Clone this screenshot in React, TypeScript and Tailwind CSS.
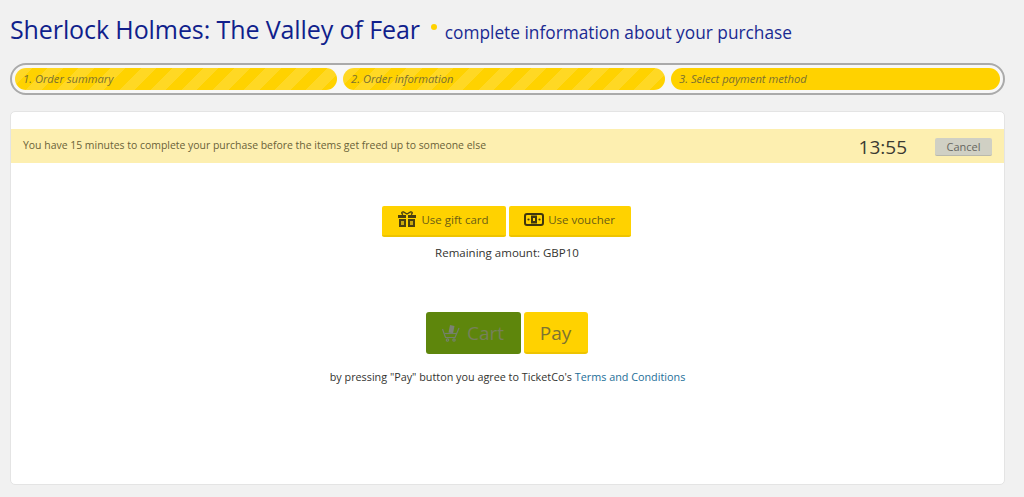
function GiftIcon() {
  return (
    <svg width="18" height="16" viewBox="0 0 18 16" className="mr-[5px] -mt-[3px]" fill="#4a3f10">
      <path d="M5 3.500C3 2.500 3.500.5 5.500 1L9 3l3.500-2c2-.5 2.500 1.500.5 2.500" fill="none" stroke="#4a3f10" strokeWidth="1.400" />
      <rect x="0" y="4" width="8" height="3" />
      <rect x="10" y="4" width="8" height="3" />
      <rect x="1" y="8" width="7" height="8" />
      <rect x="10" y="8" width="7" height="8" />
      <rect x="3" y="10" width="3" height="4" fill="#c9a80c" />
      <rect x="12" y="10" width="3" height="4" fill="#c9a80c" />
    </svg>
  );
}

function VoucherIcon() {
  return (
    <svg width="20" height="13" viewBox="0 0 20 13" className="mr-[4px] -mt-[3px]">
      <rect x="1" y="1" width="18" height="11" rx="2" fill="none" stroke="#3f360e" strokeWidth="2" />
      <rect x="7" y="2.500" width="6" height="8" fill="#3f360e" />
      <circle cx="4.500" cy="6.500" r="1.100" fill="#3f360e" />
      <circle cx="15.500" cy="6.500" r="1.100" fill="#3f360e" />
      <rect x="9" y="5" width="2" height="3" fill="#ffd200" />
    </svg>
  );
}

function CartIcon() {
  return (
    <svg width="18" height="18" viewBox="0 0 18 18" className="mr-[7px]" fill="none" stroke="#73806a" strokeWidth="1.200">
      <path d="M6.500 8.500L8 1l4.500 1L11 9.500z" fill="#7b8273" stroke="none" />
      <path d="M.5 5l3 8.500h9.500L17 4" />
      <path d="M2.500 9.500h12.500" />
      <circle cx="5.500" cy="16" r="1.200" />
      <circle cx="12" cy="16" r="1.200" />
    </svg>
  );
}

const steps = ['1. Order summary', '2. Order information'];

export default function App() {
  return (
    <div className="h-[497px] w-[1024px] overflow-hidden bg-[#f1f1f1] pl-2.5 pr-[19px] pt-[11px] [font-family:'Open_Sans',sans-serif]">
      <div className="flex h-[36px] items-baseline text-[#101f8c]">
        <h1 className="text-[25px] leading-[36px] font-medium tracking-[-0.1px]">Sherlock Holmes: The Valley of Fear</h1>
        <span className="ml-[11px] mr-[8px] h-[6px] w-[6px] -mt-1 self-center rounded-full bg-[#ffd200]" />
        <h2 className="text-[17.300px] font-medium text-[#1a2a92]">complete information about your purchase</h2>
      </div>

      <div className="mt-4 flex h-[32px] gap-1.5 rounded-full border-2 border-[#aaaaaa] bg-[#f7f7f7] p-[3px]">
        {steps.map((s) => (
          <div
            key={s}
            className="w-[322px] rounded-full bg-[repeating-linear-gradient(-45deg,#ffd200_0px,#ffd200_11px,#ffd824_11px,#ffd824_22px)] pl-2 text-[11.200px] leading-[22px] font-medium text-[#7a7031] italic"
          >
            {s}
          </div>
        ))}
        <div className="flex-1 rounded-full bg-[#ffd200] pl-2 text-[11.200px] leading-[22px] font-medium text-[#7a7031] italic">
          3. Select payment method
        </div>
      </div>

      <div className="mt-4 h-[374px] rounded-[5px] border border-[#e4e4e4] bg-white pt-[17px]">
        <div className="flex h-[34px] items-center bg-[#fdefb0] px-3 text-[#6a6238]">
          <span className="text-[10.450px]">You have 15 minutes to complete your purchase before the items get freed up to someone else</span>
          <span className="ml-auto mt-[2px] text-[19px] font-medium text-[#3a3a32]">13:55</span>
          <button className="ml-7 mt-[2px] h-[18px] w-[57px] rounded-[2px] border-b border-[#b9b9ac] bg-[#d0d0c4] text-[11px] leading-[16px] text-[#666660]">
            Cancel
          </button>
        </div>

        <div className="mt-[43px] flex justify-center gap-[3px] pr-[3px]">
          <button className="flex h-[31px] w-[124px] items-center justify-center rounded-[2px] border-b-2 border-[#eec400] bg-[#ffd200] text-[11.500px] text-[#6a5d15]">
            <GiftIcon />
            <span className="-mt-[2px]">Use gift card</span>
          </button>
          <button className="flex h-[31px] w-[122px] items-center justify-center rounded-[2px] border-b-2 border-[#eec400] bg-[#ffd200] text-[11.500px] text-[#6a5d15]">
            <VoucherIcon />
            <span className="-mt-[2px]">Use voucher</span>
          </button>
        </div>
        <p className="mt-[8px] pr-[1px] text-center text-[11.500px] leading-[16px] font-medium text-[#33332f]">Remaining amount: GBP10</p>

        <div className="mt-[51px] flex justify-center gap-[3px] pr-[2px]">
          <button className="flex h-[42px] w-[95px] items-center justify-center rounded-[3px] bg-[#5e860c] text-[19px] text-[#76805a]">
            <CartIcon />
            Cart
          </button>
          <button className="h-[42px] w-[64px] rounded-[3px] border-b-2 border-[#eec400] bg-[#ffd200] pt-[2px] text-[19px] text-[#7d7431]">
            Pay
          </button>
        </div>
        <p className="mt-[15px] text-center text-[10.800px] leading-[16px] font-medium text-[#33332f]">
          by pressing "Pay" button you agree to TicketCo's <a className="text-[#1d6e98]">Terms and Conditions</a>
        </p>
      </div>
    </div>
  );
}
